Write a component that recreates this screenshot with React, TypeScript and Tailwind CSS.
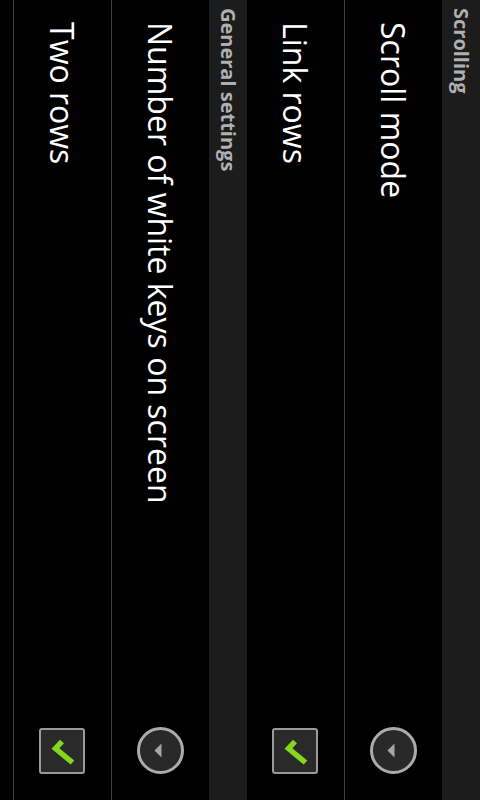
import React from "react";

function CheckBox() {
  return (
    <div className="w-[46px] h-[46px] rounded-[3px] border-2 border-[#9a9a9a] bg-[#2a2a2a] flex items-center justify-center">
      <svg width="42" height="42" viewBox="2 2 42 42">
        <polyline
          points="13.5,23 20.5,29.5 34.5,12.5"
          fill="none"
          stroke="#86d61c"
          strokeWidth="5.5"
          strokeLinecap="butt"
          strokeLinejoin="miter"
        />
      </svg>
    </div>
  );
}

function Radio() {
  return (
    <div className="w-[47px] h-[47px] rounded-full border-[3px] border-[#ababab] bg-[#292929] flex items-center justify-center">
      <svg width="41" height="41" viewBox="3 3 41 41">
        <polygon points="16.5,22.5 30.5,22.5 23.5,29.5" fill="#a6a6a6" />
      </svg>
    </div>
  );
}

function Header({ title }: { title: string }) {
  return (
    <div className="h-[38px] bg-[#1c1c1c] flex items-center pl-[8px] shrink-0">
      <span className="text-[20px] font-bold text-[#b0b0b0] leading-none font-['Open_Sans',sans-serif]">
        {title}
      </span>
    </div>
  );
}

function Row({ label, kind, divider, h }: { label: string; kind: "check" | "radio"; divider: boolean; h: string }) {
  return (
    <div className={`${h} shrink-0 flex items-center justify-between pl-[22px] pr-[26px] bg-black ${divider ? "border-b border-[#3f3f3f]" : ""}`}>
      <span className="text-[32px] text-white leading-none font-['Open_Sans',sans-serif]">{label}</span>
      {kind === "check" ? <CheckBox /> : <Radio />}
    </div>
  );
}

export default function App() {
  return (
    <div className="w-[480px] h-[800px] overflow-hidden bg-black relative">
      <div className="w-[800px] h-[480px] origin-top-left rotate-90 translate-x-[480px] flex flex-col bg-black">
        <Header title="Scrolling" />
        <Row label="Scroll mode" kind="radio" divider={true} h="h-[98px]" />
        <Row label="Link rows" kind="check" divider={false} h="h-[97px]" />
        <Header title="General settings" />
        <Row label="Number of white keys on screen" kind="radio" divider={true} h="h-[98px]" />
        <Row label="Two rows" kind="check" divider={true} h="h-[98px]" />
      </div>
    </div>
  );
}
